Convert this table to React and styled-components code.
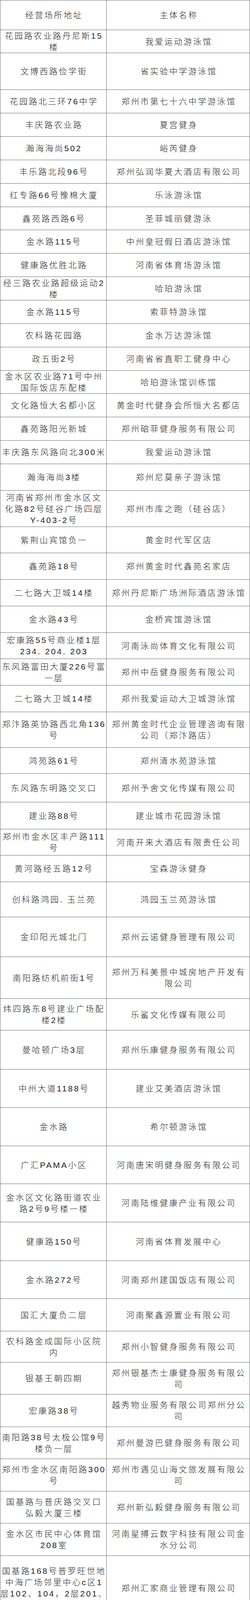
import React from "react";
import styled, { createGlobalStyle } from "styled-components";

const GlobalStyle = createGlobalStyle`
  html, body { margin: 0; padding: 0; background: #ffffff; }
  body { font-family: "Liberation Sans", "Noto Sans CJK SC", sans-serif; }
`;

const Table = styled.div`
  width: 640px;
  box-sizing: border-box;
  border-top: 1px solid #6b6b6b;
`;

const Row = styled.div`
  display: grid;
  grid-template-columns: 272px 368px;
  height: ${(p) => p.$h}px;
  box-sizing: border-box;
  border-bottom: 1px solid #6b6b6b;
`;

const Cell = styled.div`
  display: flex;
  flex-direction: column;
  align-items: center;
  justify-content: center;
  box-sizing: border-box;
  min-height: 0;
  border-left: 1px solid #6b6b6b;
  border-right: ${(p) => (p.$last ? "1px solid #6b6b6b" : "none")};
  padding-left: 3.5px;
  font-family: "Liberation Sans", "Noto Sans CJK SC", sans-serif;
  font-weight: 300;
  font-size: 21px;
  letter-spacing: 3.5px;
  line-height: 29px;
  color: #222222;
  white-space: nowrap;
`;

const Line = styled.span`
  display: block;
  text-align: center;
`;

const rows = [
  [76, ["经营场所地址"], ["主体名称"]],
  [59, ["花园路农业路丹尼斯15", "楼"], ["我爱运动游泳馆"]],
  [94, ["文博西路俭学街"], ["省实验中学游泳馆"]],
  [60, ["花园路北三环76中学"], ["郑州市第七十六中学游泳馆"]],
  [60, ["丰庆路农业路"], ["夏宫健身"]],
  [60, ["瀚海海尚502"], ["峪芮健身"]],
  [60, ["丰乐路北段96号"], ["郑州弘润华夏大酒店有限公司"]],
  [60, ["红专路66号豫棉大厦"], ["乐泳游泳馆"]],
  [59, ["鑫苑路西路6号"], ["圣菲城丽健游泳"]],
  [60, ["金水路115号"], ["中州皇冠假日酒店游泳馆"]],
  [60, ["健康路优胜北路"], ["河南省体育场游泳馆"]],
  [60, ["经三路农业路超级运动2", "楼"], ["哈珀游泳馆"]],
  [60, ["金水路115号"], ["索菲特游泳馆"]],
  [60, ["农科路花园路"], ["金水万达游泳馆"]],
  [60, ["政五街2号"], ["河南省省直职工健身中心"]],
  [59, ["金水区农业路71号中州", "国际饭店东配楼"], ["哈珀游泳馆训练馆"]],
  [60, ["文化路恒大名都小区"], ["黄金时代健身会所恒大名都店"]],
  [60, ["鑫苑路阳光新城"], ["郑州硇菲健身服务有限公司"]],
  [60, ["丰庆路东风路向北300米"], ["我爱运动游泳馆"]],
  [68, ["瀚海海尚3楼"], ["郑州尼莫亲子游泳馆"]],
  [93, ["河南省郑州市金水区文", "化路82号硅谷广场四层", "Y-403-2号"], ["郑州市库之跑（硅谷店）"]],
  [67, ["紫荆山宾馆负一"], ["黄金时代军区店"]],
  [68, ["鑫苑路18号"], ["郑州黄金时代鑫苑名家店"]],
  [68, ["二七路大卫城14楼"], ["郑州丹尼斯广场洲际酒店游泳馆"]],
  [68, ["金水路43号"], ["金桥宾馆游泳馆"]],
  [67, ["宏康路55号商业楼1层", "234. 204. 203"], ["河南泳尚体育文化有限公司"]],
  [68, ["东风路富田大厦226号富", "一层"], ["郑州中岳健身服务有限公司"]],
  [68, ["二七路大卫城14楼"], ["郑州我爱运动大卫城游泳馆"]],
  [91, ["郑汴路英协路西北角136", "号"], ["郑州黄金时代企业管理咨询有限", "公司（郑汴路店）"]],
  [67, ["鸿苑路61号"], ["郑州清水苑游泳馆"]],
  [73, ["东风路东明路交叉口"], ["郑州予舍文化传媒有限公司"]],
  [69, ["建业路88号"], ["建业城市花园游泳馆"]],
  [67, ["郑州市金水区丰产路111", "号"], ["河南开来大酒店有限责任公司"]],
  [68, ["黄河路经五路12号"], ["宝森游泳健身"]],
  [90, ["创科路鸿园. 玉兰苑"], ["鸿园玉兰苑游泳馆"]],
  [102, ["金印阳光城北门"], ["郑州云诺健身管理有限公司"]],
  [107, ["南阳路纺机前街1号"], ["郑州万科美景中城房地产开发有", "限公司"]],
  [81, ["纬四路东8号建业广场配", "楼2楼"], ["乐鲨文化传媒有限公司"]],
  [100, ["曼哈顿广场3层"], ["郑州乐康健身服务有限公司"]],
  [98, ["中州大道1188号"], ["建业艾美酒店游泳馆"]],
  [98, ["金水路"], ["希尔顿游泳馆"]],
  [97, ["广汇PAMA小区"], ["河南唐宋明健身服务有限公司"]],
  [98, ["金水区文化路街道农业", "路2号9号楼一楼"], ["河南陆维健康产业有限公司"]],
  [99, ["健康路150号"], ["河南省体育发展中心"]],
  [97, ["金水路272号"], ["河南郑州建国饭店有限公司"]],
  [83, ["国汇大厦负二层"], ["河南聚鑫源置业有限公司"]],
  [80, ["农科路金成国际小区院", "内"], ["郑州小智健身服务有限公司"]],
  [82, ["银基王朝四期"], ["郑州银基杰士康健身服务有限公", "司"]],
  [83, ["宏康路38号"], ["越秀物业服务有限公司郑州分公", "司"]],
  [82, ["南阳路38号太极公馆9号", "楼负一层"], ["郑州曼游巴健身服务有限公司"]],
  [83, ["郑州市金水区南阳路300", "号"], ["郑州市遇见山海文旅发展有限公", "司"]],
  [82, ["国基路与普庆路交叉口", "弘毅大厦三楼"], ["郑州新弘毅健身服务有限公司"]],
  [83, ["金水区市民中心体育馆", "208室"], ["河南星搏云数字科技有限公司金", "水分公司"]],
  [
    165,
    ["国基路168号普罗旺世地", "中海广场邻里中心c区1", "层102、104，2层201、", "202，3层301、302"],
    ["郑州汇家商业管理有限公司"],
  ],
  [81, ["东明路北174号农资大厦", "一楼"], ["郑州鲸喜体育有限公司"]],
];

export default function App() {
  return (
    <>
      <GlobalStyle />
      <Table>
        {rows.map(([h, left, right], i) => (
          <Row key={i} $h={h}>
            <Cell>
              {left.map((t, j) => (
                <Line key={j}>{t}</Line>
              ))}
            </Cell>
            <Cell $last>
              {right.map((t, j) => (
                <Line key={j}>{t}</Line>
              ))}
            </Cell>
          </Row>
        ))}
      </Table>
    </>
  );
}
